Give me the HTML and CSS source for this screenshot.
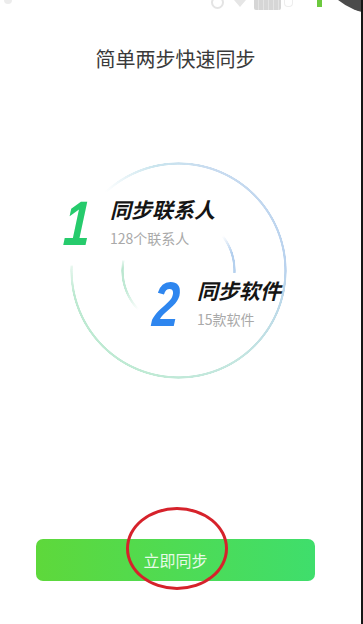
FILE: index.html
```html
<!DOCTYPE html>
<html lang="zh-CN">
<head>
<meta charset="utf-8">
<title>简单两步快速同步</title>
<link rel="stylesheet" href="styles.css">
</head>
<body>
<div class="screen">
  <div class="status">
    <span class="si si-dot"></span>
    <span class="si si-alarm"></span>
    <span class="si si-wifi"></span>
    <span class="si si-batt"></span>
    <span class="si si-x"></span>
    <span class="si si-green"></span>
  </div>
  <div class="cam"></div>
  <h1 class="title">简单两步快速同步</h1>
  <div class="stage">
    <div class="ring ring-outer"></div>
    <div class="ring ring-inner"></div>
    <div class="step step-1">
      <span class="num num-1">1</span>
      <div class="info">
        <div class="info-title">同步联系人</div>
        <div class="info-sub">128个联系人</div>
      </div>
    </div>
    <div class="step step-2">
      <span class="num num-2">2</span>
      <div class="info">
        <div class="info-title">同步软件</div>
        <div class="info-sub">15款软件</div>
      </div>
    </div>
  </div>
  <button class="sync-btn">立即同步</button>
  <div class="mark"></div>
</div>
</body>
</html>
```
FILE: styles.css
```css
html, body {
  margin: 0;
  padding: 0;
  background: #fff;
}
.screen {
  position: relative;
  width: 363px;
  height: 624px;
  box-sizing: border-box;
  border-right: 2px solid #161616;
  overflow: hidden;
  background: #fff;
  font-family: "Noto Sans CJK SC", "Noto Sans", sans-serif;
}
.status {
  display: flex;
  align-items: flex-start;
  height: 24px;
  padding-left: 4px;
}
.si { display: block; }
.si-dot {
  width: 8px; height: 4px;
  background: #ececec;
  border-radius: 0 0 4px 4px;
}
.si-alarm {
  margin-left: 199px;
  margin-top: -4px;
  width: 9px; height: 9px;
  border: 2px solid #e4e4e4;
  border-radius: 50%;
}
.si-wifi {
  margin-left: 10px;
  width: 0; height: 0;
  border-left: 6px solid transparent;
  border-right: 6px solid transparent;
  border-top: 7px solid #e6e6e6;
}
.si-batt {
  margin-left: 8px;
  width: 27px; height: 10px;
  background: repeating-linear-gradient(90deg, #d6d6d6 0 4px, #e4e4e4 4px 5px);
  border-radius: 0 0 2px 2px;
}
.si-x {
  margin-left: 3px;
  width: 7px; height: 6px;
  border: 1.5px solid #ededed;
  border-top: 0;
  border-radius: 0 0 4px 4px;
}
.si-green {
  margin-left: 24px;
  width: 5px; height: 7px;
  background: #6cc93e;
}
.cam {
  position: absolute;
  left: 314px;
  top: -114px;
  width: 128px;
  height: 128px;
  border-radius: 50%;
  background: #4b4b4b;
}
.title {
  margin: 21px 0 0;
  padding-right: 10px;
  text-align: center;
  font-size: 20px;
  line-height: 28px;
  font-weight: 400;
  color: #3a3a3a;
}
.stage {
  position: relative;
  height: 240px;
  margin-top: 77px;
}
.ring {
  position: absolute;
  border-radius: 50%;
  -webkit-mask: radial-gradient(closest-side, transparent calc(100% - 3px), #000 calc(100% - 2.4px), #000 calc(100% - 0.6px), transparent 100%);
  mask: radial-gradient(closest-side, transparent calc(100% - 3px), #000 calc(100% - 2.4px), #000 calc(100% - 0.6px), transparent 100%);
}
.ring-outer {
  left: 69.5px;
  top: 11.5px;
  width: 217px;
  height: 217px;
  background: conic-gradient(from 317deg,
    rgba(190, 232, 220, 0) 0deg,
    rgba(196, 226, 236, 0.9) 30deg,
    #c9dcf0 60deg,
    #b9d2ee 130deg,
    #c4e6e0 190deg,
    #bfead4 240deg,
    #bde9d1 300deg,
    rgba(190, 232, 210, 0.4) 315deg,
    rgba(255, 255, 255, 0) 316deg);
}
.ring-inner {
  left: 120.5px;
  top: 62.5px;
  width: 115px;
  height: 115px;
  background: conic-gradient(from 0deg,
    rgba(255,255,255,0) 0deg,
    rgba(255,255,255,0) 52deg,
    rgba(180, 206, 236, 0.3) 58deg,
    #b3cfee 72deg,
    #b6d1ee 92deg,
    rgba(255,255,255,0) 93deg,
    rgba(255,255,255,0) 225deg,
    rgba(190, 232, 212, 0) 226deg,
    #c2ead6 250deg,
    #bae6cf 272deg,
    rgba(186, 230, 207, 0.4) 279deg,
    rgba(255,255,255,0) 281deg,
    rgba(255,255,255,0) 360deg);
}
.step {
  position: relative;
  display: flex;
  align-items: flex-start;
}
.step-1 {
  padding-top: 46px;
  padding-left: 60px;
}
.step-2 {
  margin-top: 22px;
  padding-left: 149px;
}
.num {
  display: block;
  width: 50px;
  margin-top: -4px;
  font-family: "Liberation Sans", Arial, sans-serif;
  font-style: italic;
  font-weight: 700;
  font-size: 63px;
  line-height: 63px;
  transform: scaleX(0.76) skewX(-5deg);
  transform-origin: 16.5px 50%;
}
.step-2 .num { width: 48px; }
.num-1 { color: #26cb6c; }
.num-2 { color: #2e86ef; }
.info-title {
  font-size: 21px;
  line-height: 26px;
  font-weight: 700;
  font-style: italic;
  color: #151515;
}
.info-sub {
  margin-top: 6px;
  font-size: 14px;
  line-height: 20px;
  color: #a9a9a9;
}
.sync-btn {
  display: block;
  margin: 149px 0 0 36px;
  width: 279px;
  height: 42px;
  padding: 0;
  border: 0;
  border-radius: 7px;
  background: linear-gradient(90deg, #5ed83b, #3fde6c);
  color: rgba(255, 255, 255, 0.88);
  font-family: "Noto Sans CJK SC", "Noto Sans", sans-serif;
  font-size: 16px;
  line-height: 42px;
}
.mark {
  position: absolute;
  left: 126px;
  top: 507px;
  width: 102px;
  height: 83px;
  box-sizing: border-box;
  border: 3.5px solid #d6222b;
  border-radius: 50%;
}
```
